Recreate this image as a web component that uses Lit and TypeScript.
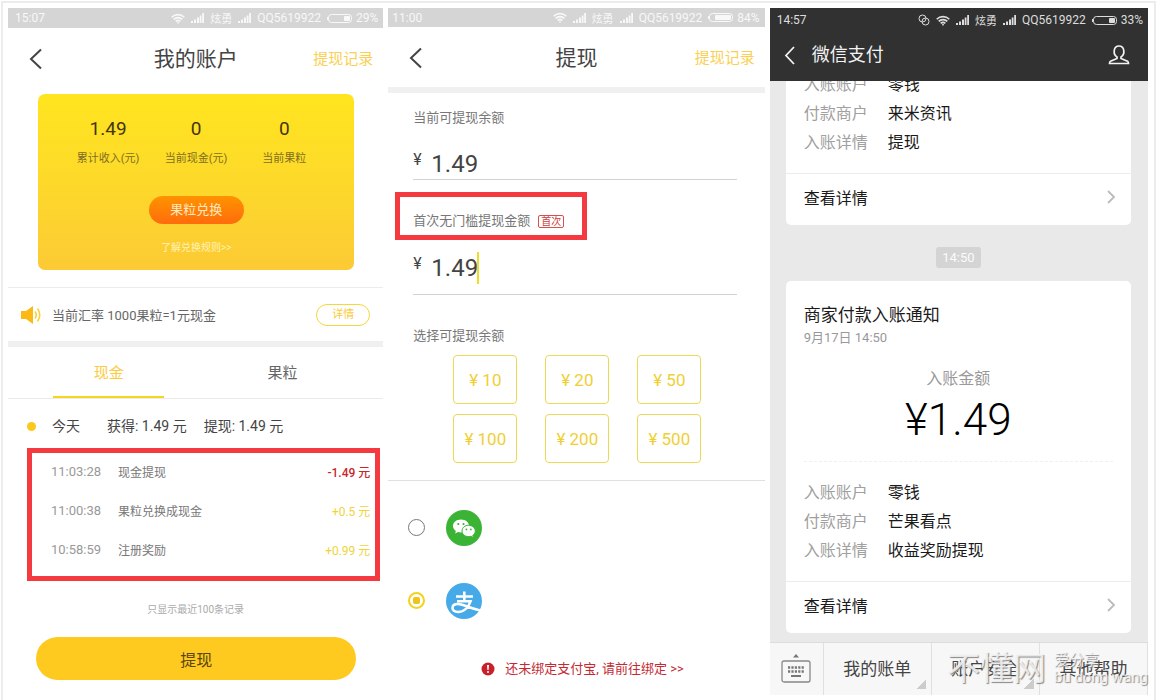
import { LitElement, html, css } from "lit";
import { customElement, property, state } from "lit/decorators.js";
import { classMap } from "lit/directives/class-map.js";

const base = css`
  * {
    box-sizing: border-box;
  }
  :host {
    display: flex;
    flex-direction: column;
    min-width: 0;
    font-family: Roboto, "Noto Sans CJK SC", sans-serif;
    color: #444;
  }
  button,
  input {
    font: inherit;
    color: inherit;
    margin: 0;
    padding: 0;
    border: 0;
    background: none;
    outline: none;
  }
  button {
    cursor: pointer;
  }
  a {
    color: inherit;
    text-decoration: none;
  }
  h1,
  h2,
  p,
  dl,
  dd {
    margin: 0;
    font-weight: 400;
  }
  svg {
    display: block;
    flex: none;
  }
  .header {
    display: grid;
    grid-template-columns: 1fr auto 1fr;
    align-items: center;
    padding: 0 10px;
  }
  .header h1 {
    font-size: 21px;
    line-height: 28px;
  }
  .header a {
    justify-self: end;
    font-size: 15px;
    line-height: 20px;
    color: #fbd052;
  }
  .back {
    justify-self: start;
    padding-left: 10px;
  }
`;

const backIcon = html`<svg width="16" height="22" viewBox="0 0 16 22" fill="none" stroke="currentColor" stroke-width="2">
  <path d="M13 1.5 3 11l10 9.5" />
</svg>`;

@customElement("status-bar")
class StatusBar extends LitElement {
  @property() time = "";
  @property({ type: Number }) battery = 50;
  @property({ type: Boolean }) linked = false;

  static styles = [
    base,
    css`
      :host {
        flex-direction: row;
        align-items: center;
        justify-content: space-between;
        padding: 0 5px 0 7px;
        font-size: 12px;
        line-height: 18px;
        color: inherit;
      }
      .right {
        display: flex;
        align-items: center;
        gap: 6px;
        white-space: nowrap;
      }
      .carrier {
        font-family: "Noto Sans CJK SC", sans-serif;
        font-size: 11px;
      }
      .power {
        display: flex;
        align-items: center;
        gap: 4px;
      }
    `,
  ];

  private signal() {
    return html`<svg width="13" height="10" viewBox="0 0 13 10" fill="currentColor">
      <path d="M0 8h2v2H0zM3 6.500h2V10H3zM6 4.500h2V10H6zM8.700 2.500h1.800V10H8.700zM11.200 0H13v10h-1.800z" />
    </svg>`;
  }

  render() {
    const fill = Math.round(this.battery * 0.19);
    return html`
      <span>${this.time}</span>
      <div class="right">
        ${this.linked
          ? html`<svg width="12" height="12" viewBox="0 0 12 12" fill="none" stroke="currentColor">
              <circle cx="4.500" cy="4.500" r="3.500" />
              <circle cx="7.500" cy="7.500" r="3.500" />
            </svg>`
          : ""}
        <svg width="14" height="11" viewBox="0 0 14 11" fill="none" stroke="currentColor" stroke-width="1.600">
          <path d="M.7 4.200a9 9 0 0 1 12.600 0M2.700 6.400a6 6 0 0 1 8.600 0M4.700 8.400a3.300 3.300 0 0 1 4.600 0" />
          <circle cx="7" cy="9.700" r=".9" fill="currentColor" stroke="none" />
        </svg>
        ${this.signal()}
        <span class="carrier">炫勇</span>
        ${this.signal()}
        <span>QQ5619922</span>
        <span class="power">
          <svg width="25" height="9" viewBox="0 0 25 9">
            <rect x="1.500" y=".5" width="23" height="8" rx="3" fill="none" stroke="currentColor" />
            <rect x=${23 - fill} y="2" width=${fill} height="5" rx="1" fill="currentColor" />
            <rect x="0" y="3" width="1.500" height="3" fill="currentColor" />
          </svg>
          ${this.battery}%
        </span>
      </div>
    `;
  }
}

@customElement("account-panel")
class AccountPanel extends LitElement {
  @state() private tab = "现金";

  static styles = [
    base,
    css`
      :host {
        background: #fff;
      }
      status-bar {
        height: 20px;
        background: #d5d5d5;
        color: #f8f8f8;
      }
      .header {
        height: 62px;
      }
      .card {
        margin: 4px 29px 17px 30px;
        padding: 24px 26px 14px;
        border-radius: 7px;
        background: linear-gradient(#ffe51f, #fdd92a 50%, #fcca35);
        text-align: center;
        display: flex;
        flex-direction: column;
        align-items: center;
      }
      .stats {
        display: grid;
        grid-template-columns: repeat(3, 1fr);
        align-self: stretch;
      }
      .stats dl {
        display: flex;
        flex-direction: column-reverse;
        gap: 11px;
      }
      .stats dd {
        font-size: 19px;
        line-height: 22px;
        color: #45350f;
      }
      .stats dt {
        font-size: 11px;
        line-height: 16px;
        white-space: nowrap;
        color: #806d23;
      }
      .exchange {
        width: 95px;
        height: 28px;
        margin-top: 29px;
        border-radius: 14px;
        font-size: 13px;
        line-height: 26px;
        color: #ffe9bd;
        background: linear-gradient(#ff9300, #ff6c0c);
      }
      .rules {
        margin-top: 16px;
        font-size: 10px;
        line-height: 16px;
        color: #fff3b8;
      }
      .rate {
        display: flex;
        align-items: center;
        height: 60px;
        padding: 0 13px;
        border-top: 1px solid #ececec;
        border-bottom: 6px solid #f0f0f0;
        font-size: 12px;
        color: #666;
      }
      .rate p {
        flex: 1;
        margin-left: 10px;
        font-size: 13px;
      }
      .detail {
        width: 54px;
        height: 22px;
        border: 1px solid #f5d63c;
        border-radius: 11px;
        font-size: 11px;
        line-height: 20px;
        color: #fbcb3c;
      }
      .tabs {
        display: grid;
        grid-template-columns: 1fr 1fr;
        justify-items: center;
        height: 52px;
        padding: 0 14px;
        border-bottom: 1px solid #ebebeb;
      }
      .tab {
        width: 64%;
        border-bottom: 2px solid transparent;
        font-size: 15px;
        color: #666;
      }
      .tab.on {
        color: #fbcb3c;
        border-color: #f3d81f;
      }
      .today {
        display: flex;
        align-items: center;
        padding: 17px 18px 12px;
        font-size: 14px;
        line-height: 20px;
      }
      .dot {
        width: 9px;
        height: 9px;
        margin: 0 16px 0 1px;
        border-radius: 50%;
        background: #fbc91c;
      }
      .today span {
        margin-right: 27px;
      }
      .today p {
        margin-right: 17px;
      }
      .records {
        margin: 0 3px 0 19px;
        padding: 0 5px 6px 19px;
        border: 5px solid #f43a40;
      }
      table {
        width: 100%;
        border-collapse: collapse;
        font-size: 12px;
      }
      td {
        height: 39px;
        padding: 0 0 2px;
      }
      .time {
        width: 67px;
        font-size: 13px;
        color: #999;
      }
      .what {
        color: #777;
      }
      .sum {
        text-align: right;
        color: #f0d43a;
      }
      .sum.minus {
        color: #c8272d;
        font-weight: 500;
      }
      .note {
        margin: 21px 0 19px;
        text-align: center;
        font-size: 10px;
        line-height: 16px;
        color: #aaa;
      }
      .withdraw {
        height: 43px;
        margin: 0 27px 0 28px;
        border-radius: 22px;
        font-size: 16px;
        color: #5b4510;
        background: #ffca20;
      }
    `,
  ];

  private stats = [
    ["累计收入(元)", "1.49"],
    ["当前现金(元)", "0"],
    ["当前果粒", "0"],
  ];
  private records = [
    ["11:03:28", "现金提现", "-1.49 元"],
    ["11:00:38", "果粒兑换成现金", "+0.5 元"],
    ["10:58:59", "注册奖励", "+0.99 元"],
  ];

  render() {
    return html`
      <status-bar time="15:07" battery="29"></status-bar>
      <header class="header">
        <button class="back" aria-label="返回">${backIcon}</button>
        <h1>我的账户</h1>
        <a href="#records">提现记录</a>
      </header>
      <section class="card">
        <div class="stats">
          ${this.stats.map(([k, v]) => html`<dl><dt>${k}</dt><dd>${v}</dd></dl>`)}
        </div>
        <button class="exchange">果粒兑换</button>
        <a class="rules" href="#rules">了解兑换规则&gt;&gt;</a>
      </section>
      <section class="rate">
        <svg width="21" height="18" viewBox="0 0 21 18">
          <path d="M0 5h5l7-5v18l-7-5H0z" fill="#fcb916" />
          <path d="M14 5.500q2.500 3.500 0 7M16.500 2.500q4.500 6.500 0 13" fill="none" stroke="#fbd03c" stroke-width="1.600" />
        </svg>
        <p>当前汇率 1000果粒=1元现金</p>
        <button class="detail">详情</button>
      </section>
      <nav class="tabs">
        ${["现金", "果粒"].map(
          (t) => html`<button class=${classMap({ tab: true, on: t === this.tab })} @click=${() => (this.tab = t)}>
            ${t}
          </button>`
        )}
      </nav>
      <div class="today">
        <i class="dot"></i><span>今天</span>
        <p>获得: 1.49 元</p>
        <p>提现: 1.49 元</p>
      </div>
      <div class="records">
        <table>
          ${this.records.map(
            ([time, what, sum]) => html`<tr>
              <td class="time">${time}</td>
              <td class="what">${what}</td>
              <td class=${classMap({ sum: true, minus: sum.startsWith("-") })}>${sum}</td>
            </tr>`
          )}
        </table>
      </div>
      <p class="note">只显示最近100条记录</p>
      <button class="withdraw">提现</button>
    `;
  }
}

@customElement("withdraw-panel")
class WithdrawPanel extends LitElement {
  @state() private channel = "alipay";

  static styles = [
    base,
    css`
      :host {
        background: #fff;
      }
      status-bar {
        height: 19px;
        padding-left: 4px;
        background: #d5d5d5;
        color: #f8f8f8;
      }
      .header {
        height: 66px;
        padding-top: 2px;
        border-bottom: 6px solid #f0f0f0;
      }
      .form {
        padding: 15px 28px 17px 25px;
        border-bottom: 1px solid #e0e0e0;
      }
      .label {
        display: block;
        font-size: 13px;
        line-height: 20px;
        color: #777;
      }
      .amount {
        display: flex;
        align-items: center;
        border-bottom: 1px solid #d2d2d2;
        font-size: 24px;
        line-height: 30px;
        color: #444;
      }
      .amount.total {
        margin-top: 21px;
      }
      .amount.entry {
        margin-top: 12px;
        padding-bottom: 10px;
      }
      .yen {
        width: 18px;
        padding-bottom: 9px;
        font-size: 16px;
        line-height: 20px;
      }
      .amount input {
        width: 46px;
        height: 30px;
        caret-color: #f0d81c;
      }
      .caret {
        width: 2px;
        height: 32px;
        background: #f0dc20;
      }
      .first {
        display: flex;
        align-items: center;
        gap: 8px;
        width: 192px;
        margin: 12px 0 0 -18px;
        padding: 14px 0 4px 13px;
        border: 5px solid #f43a40;
        white-space: nowrap;
      }
      .tag {
        padding: 0 2px;
        border: 1px solid #d8504c;
        border-radius: 2px;
        font-size: 10px;
        line-height: 11px;
        color: #c8403c;
      }
      .choose {
        margin-top: 31px;
      }
      .choices {
        display: grid;
        grid-template-columns: repeat(3, 64px);
        grid-auto-rows: 49px;
        gap: 10px 28px;
        margin: 9px 0 0 40px;
      }
      .choices button {
        border: 1px solid #ecd955;
        border-radius: 4px;
        font-size: 17px;
        color: #f0cf35;
      }
      .channels {
        padding: 10px 20px 0;
      }
      .channel {
        display: flex;
        align-items: center;
        gap: 21px;
        height: 73px;
      }
      .channel input {
        appearance: none;
        display: grid;
        place-items: center;
        width: 17px;
        height: 17px;
        border: 1px solid #777;
        border-radius: 50%;
      }
      .channel input:checked {
        border: 2px solid #f2d21e;
      }
      .channel input:checked::before {
        content: "";
        width: 7px;
        height: 7px;
        border-radius: 2px;
        background: #eec41c;
      }
      .warn {
        display: flex;
        align-items: center;
        justify-content: center;
        gap: 10px;
        margin: 22px 0 0 12px;
        font-size: 13px;
        line-height: 20px;
        color: #c42a33;
      }
    `,
  ];

  private pick(name: string) {
    return html`<input
      type="radio"
      name="channel"
      aria-label=${name === "wechat" ? "微信" : "支付宝"}
      .checked=${this.channel === name}
      @change=${() => (this.channel = name)}
    />`;
  }

  render() {
    return html`
      <status-bar time="11:00" battery="84"></status-bar>
      <header class="header">
        <button class="back" aria-label="返回">${backIcon}</button>
        <h1>提现</h1>
        <a href="#records">提现记录</a>
      </header>
      <section class="form">
        <span class="label">当前可提现余额</span>
        <div class="amount total"><span class="yen">¥</span><span>1.49</span></div>
        <div class="first">
          <label class="label" for="sum">首次无门槛提现金额</label>
          <span class="tag">首次</span>
        </div>
        <div class="amount entry">
          <span class="yen">¥</span><input id="sum" value="1.49" inputmode="decimal" /><i class="caret"></i>
        </div>
        <span class="label choose">选择可提现余额</span>
        <div class="choices">
          ${[10, 20, 50, 100, 200, 500].map((n) => html`<button>¥ ${n}</button>`)}
        </div>
      </section>
      <section class="channels">
        <label class="channel">
          ${this.pick("wechat")}
          <svg width="36" height="36" viewBox="0 0 36 36">
            <circle cx="18" cy="18" r="18" fill="#3bb335" />
            <path
              d="M15 9.500c-4.700 0-8 2.900-8 6.500 0 2.100 1.100 3.800 2.900 5l-.8 2.600 3-1.500c1 .3 1.900.4 2.900.4 4.700 0 8-2.900 8-6.500s-3.300-6.500-8-6.500z"
              fill="#fff"
            />
            <path
              d="M22.500 15.300c3.700 0 6.800 2.500 6.800 5.700 0 1.800-1 3.300-2.500 4.300l.6 2.300-2.600-1.300c-.8.200-1.500.3-2.300.3-3.700 0-6.500-2.400-6.500-5.600s2.800-5.700 6.500-5.700z"
              fill="#fff"
              stroke="#3bb335"
            />
            <g fill="#3bb335">
              <circle cx="12.300" cy="14" r="1.100" />
              <circle cx="17.500" cy="14" r="1.100" />
              <circle cx="20.400" cy="19.400" r=".9" />
              <circle cx="24.800" cy="19.400" r=".9" />
            </g>
          </svg>
        </label>
        <label class="channel">
          ${this.pick("alipay")}
          <svg width="36" height="36" viewBox="0 0 36 36" fill="none" stroke="#fff">
            <circle cx="18" cy="18" r="18" fill="#46aae8" stroke="none" />
            <path d="M10 13.500h17M18.300 8.500v9.500" stroke-width="2.600" />
            <path
              d="M11 18.300h13.500c-2 6-6.500 10.700-12.500 10.700-3.800 0-5.500-1.800-5.500-4 0-2.500 2.200-4 5.200-4 5.300 0 9.300 3.200 22.500 6.500"
              stroke-width="2.600"
            />
          </svg>
        </label>
      </section>
      <a class="warn" href="#bind">
        <svg width="14" height="14" viewBox="0 0 14 14">
          <circle cx="7" cy="7" r="6.500" fill="#c9202c" />
          <path d="M6 3h2l-.4 5H6.400z" fill="#fff" />
          <circle cx="7" cy="10" r="1" fill="#fff" />
        </svg>
        还未绑定支付宝, 请前往绑定 &gt;&gt;
      </a>
    `;
  }
}

@customElement("wechat-panel")
class WechatPanel extends LitElement {
  static styles = [
    base,
    css`
      :host {
        background: #e9e9e9;
      }
      status-bar {
        height: 24px;
        background: #313131;
        color: #ddd;
      }
      .bar {
        display: flex;
        align-items: center;
        height: 49px;
        padding: 0 18px 3px 14px;
        background: #313131;
        color: #f2f2f2;
      }
      .bar h1 {
        flex: 1;
        margin-left: 16px;
        font-size: 18px;
        line-height: 24px;
      }
      .feed {
        flex: 1 1 0;
        min-height: 0;
        overflow: hidden;
        display: flex;
        flex-direction: column;
        justify-content: flex-end;
        padding: 0 17px 9px 16px;
      }
      .msg {
        flex: none;
        border-radius: 5px;
        background: #fff;
        color: #1a1a1a;
      }
      .body {
        padding: 22px 18px 16px;
      }
      .body h2 {
        font-size: 17px;
        line-height: 24px;
      }
      .date {
        margin-top: 1px;
        font-size: 13px;
        line-height: 20px;
        color: #999;
      }
      .caption {
        margin-top: 21px;
        text-align: center;
        font-size: 16px;
        line-height: 20px;
        color: #999;
      }
      .total {
        margin: 6px 0 16px;
        text-align: center;
        font-size: 44px;
        font-weight: 300;
        line-height: 50px;
        color: #000;
      }
      .facts {
        display: grid;
        grid-template-columns: 84px 1fr;
        font-size: 16px;
        line-height: 29px;
      }
      .facts dt {
        color: #a0a0a0;
      }
      .ruled {
        padding-top: 16px;
        border-top: 1px dashed #f0f0f0;
      }
      .more {
        display: flex;
        align-items: center;
        justify-content: space-between;
        height: 52px;
        padding: 0 13px 5px 18px;
        border-top: 1px solid #ececec;
        font-size: 16px;
      }
      .stamp {
        align-self: center;
        margin: 22px 0 13px;
        padding: 0 6px;
        border-radius: 3px;
        background: #d4d4d4;
        font-size: 13px;
        line-height: 21px;
        color: #fbfbfb;
      }
      .menu {
        position: relative;
        display: grid;
        grid-template-columns: 54px 1fr 1fr 1fr;
        height: 53px;
        border-top: 1px solid #dcdcdc;
        background: #f7f7f7;
        font-size: 17px;
        color: #444;
      }
      .menu button {
        display: grid;
        place-items: center;
        padding-bottom: 3px;
        border-right: 1px solid #e0e0e0;
      }
      .menu .sub {
        background: linear-gradient(135deg, transparent 50%, #ccc 50%) right 5px bottom 6px / 10px 10px no-repeat;
      }
      .mark {
        position: absolute;
        right: 0;
        bottom: 6px;
        display: flex;
        align-items: center;
        gap: 6px;
        color: rgba(248, 248, 248, 0.85);
        text-shadow: 1px 1px 1px #888;
        pointer-events: none;
        white-space: nowrap;
      }
      .mark b {
        font-size: 33px;
        line-height: 40px;
        font-weight: 400;
      }
      .mark span {
        display: block;
        padding-left: 2px;
        font-size: 15px;
        line-height: 17px;
      }
    `,
  ];

  private facts(rows: string[][], ruled = false) {
    return html`<dl class=${classMap({ facts: true, ruled })}>
      ${rows.map(([k, v]) => html`<dt>${k}</dt><dd>${v}</dd>`)}
    </dl>`;
  }

  private more() {
    return html`<a class="more" href="#detail">
      查看详情
      <svg width="14" height="14" viewBox="0 0 14 14" fill="none" stroke="#bbb" stroke-width="1.800">
        <path d="m4 1 6 6-6 6" />
      </svg>
    </a>`;
  }

  render() {
    return html`
      <status-bar time="14:57" battery="33" linked></status-bar>
      <header class="bar">
        <button aria-label="返回">
          <svg width="12" height="19" viewBox="0 0 12 19" fill="none" stroke="currentColor" stroke-width="1.800">
            <path d="M10 1 2 9.500l8 8.500" />
          </svg>
        </button>
        <h1>微信支付</h1>
        <button aria-label="账号">
          <svg width="22" height="20" viewBox="0 0 22 20" fill="none" stroke="currentColor" stroke-width="1.700">
            <path d="M9 12C4.500 9 5.500 1 11 1s6.500 8 2 11v1.500l6.500 2.700q1 .6 1 2.300h-19q0-1.700 1-2.300L9 13.500z" />
          </svg>
        </button>
      </header>
      <main class="feed">
        <article class="msg">
          <div class="body">
            ${this.facts([
              ["入账账户", "零钱"],
              ["付款商户", "来米资讯"],
              ["入账详情", "提现"],
            ])}
          </div>
          ${this.more()}
        </article>
        <time class="stamp">14:50</time>
        <article class="msg">
          <div class="body">
            <h2>商家付款入账通知</h2>
            <p class="date">9月17日 14:50</p>
            <p class="caption">入账金额</p>
            <p class="total">¥1.49</p>
            ${this.facts(
              [
                ["入账账户", "零钱"],
                ["付款商户", "芒果看点"],
                ["入账详情", "收益奖励提现"],
              ],
              true
            )}
          </div>
          ${this.more()}
        </article>
      </main>
      <nav class="menu">
        <button aria-label="键盘">
          <svg width="30" height="30" viewBox="0 0 30 30">
            <path d="M12 4.500 15 1l3 3.500z" fill="#777" />
            <rect x="1" y="8" width="28" height="21" rx="2" fill="none" stroke="#888" stroke-width="1.300" />
            <path d="M7 14.500h16M7 18.500h16" stroke="#777" stroke-width="2.400" stroke-dasharray="2.200 1.200" />
            <path d="M10 23h10" stroke="#777" stroke-width="2" />
          </svg>
        </button>
        <button class="sub">我的账单</button>
        <button class="sub">账户安全</button>
        <button>其他帮助</button>
        <div class="mark">
          <b>不懂网</b>
          <div><span>爱分享</span><span>bu dong wang</span></div>
        </div>
      </nav>
    `;
  }
}

@customElement("app-root")
class AppRoot extends LitElement {
  static styles = css`
    :host {
      display: flow-root;
      background: #fff;
    }
    .board {
      box-sizing: border-box;
      display: grid;
      grid-template-columns: 375fr 376fr 378fr;
      gap: 5px;
      min-height: calc(100vh - 1px);
      margin: 1px 1px 0;
      padding: 5px 6px 5px 5px;
      border: 2px solid #ececec;
      border-bottom: 0;
    }
  `;

  render() {
    return html`<div class="board">
      <account-panel></account-panel>
      <withdraw-panel></withdraw-panel>
      <wechat-panel></wechat-panel>
    </div>`;
  }
}
